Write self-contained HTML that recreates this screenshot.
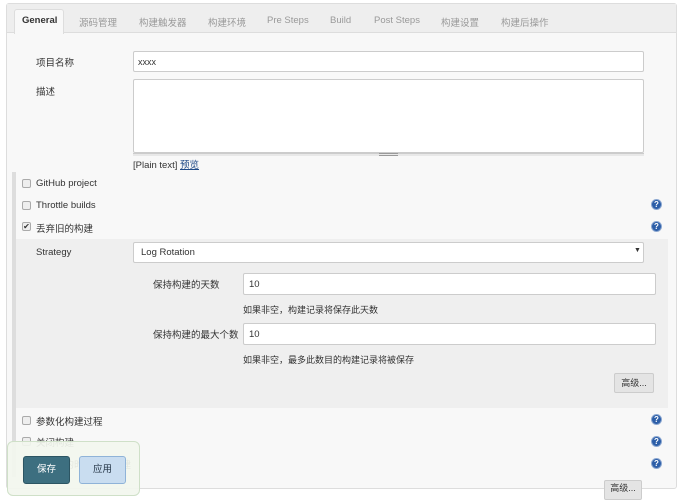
<!DOCTYPE html>
<html><head><meta charset="utf-8"><style>
*{box-sizing:border-box;margin:0;padding:0}
body{width:680px;height:493px;overflow:hidden;background:#fff;font-family:"Liberation Sans","Noto Sans CJK SC",sans-serif;font-size:9.5px;color:#333;position:relative}
.a{position:absolute;white-space:nowrap}
.frame{position:absolute;left:6px;top:3px;width:671px;height:486px;border:1px solid #ddd;background:#f8f8f8;border-radius:3px}
.tabbar{position:absolute;left:7px;top:4px;width:669px;height:29px;background:#eee;border-bottom:1px solid #ddd}
.tab{position:absolute;top:15px;color:#999;font-size:9.5px}
.inp{position:absolute;background:#fff;border:1px solid #ccc;border-radius:2px}
.cb{position:absolute;width:9px;height:9px;border:1px solid #aaa;border-radius:2px;background:#eee}
.help{position:absolute;width:11px;height:11px;border-radius:50%;background:#2c5ea8;border:1px solid #8aa6d0;color:#fff;font-size:8px;font-weight:bold;text-align:center;line-height:9px}
.btn{position:absolute;background:#e4e4e4;border:1px solid #ccc;border-radius:2px;font-size:9px;text-align:center}
</style></head><body>
<div class="frame"></div>
<div class="tabbar"></div>
<div class="a" style="left:14px;top:9px;width:50px;height:25px;background:#f8f8f8;border:1px solid #ddd;border-bottom:none;border-radius:3px 3px 0 0"></div>
<div class="tab" style="left:22px;color:#333;font-weight:bold">General</div>
<div class="tab" style="left:79px">源码管理</div>
<div class="tab" style="left:139px">构建触发器</div>
<div class="tab" style="left:208px">构建环境</div>
<div class="tab" style="left:267px">Pre Steps</div>
<div class="tab" style="left:330px">Build</div>
<div class="tab" style="left:374px">Post Steps</div>
<div class="tab" style="left:441px">构建设置</div>
<div class="tab" style="left:501px">构建后操作</div>

<div class="a" style="left:36px;top:55px">项目名称</div>
<div class="inp" style="left:133px;top:51px;width:511px;height:21px"></div>
<div class="a" style="left:138px;top:57px;font-size:9px">xxxx</div>
<div class="a" style="left:36px;top:84px">描述</div>
<div class="inp" style="left:133px;top:79px;width:511px;height:74px"></div>
<div class="a" style="left:133px;top:153px;width:511px;height:3px;background:#e8e8e8;border-top:1px solid #ccc"></div>
<div class="a" style="left:379px;top:153px;width:19px;height:3px;border-top:1px solid #999;border-bottom:1px solid #999"></div>
<div class="a" style="left:133px;top:157px">[Plain text] <span style="color:#204a87;text-decoration:underline">预览</span></div>

<div class="a" style="left:12px;top:172px;width:4px;height:305px;background:#ddd"></div>
<div class="cb" style="left:22px;top:179px"></div><div class="a" style="left:36px;top:178px">GitHub project</div>
<div class="cb" style="left:22px;top:201px"></div><div class="a" style="left:36px;top:200px">Throttle builds</div>
<div class="help" style="left:651px;top:199px">?</div>
<div class="cb" style="left:22px;top:222px;font-size:8px;line-height:7px;text-align:center">✔</div><div class="a" style="left:36px;top:221px">丢弃旧的构建</div>
<div class="help" style="left:651px;top:221px">?</div>

<div class="a" style="left:16px;top:239px;width:652px;height:169px;background:#efefef"></div>
<div class="a" style="left:36px;top:247px">Strategy</div>
<div class="inp" style="left:133px;top:242px;width:511px;height:21px"></div>
<div class="a" style="left:141px;top:247px">Log Rotation</div>
<div class="a" style="left:634px;top:247px;font-size:7px">▼</div>
<div class="a" style="left:153px;top:277px">保持构建的天数</div>
<div class="inp" style="left:243px;top:273px;width:413px;height:22px"></div>
<div class="a" style="left:249px;top:279px">10</div>
<div class="a" style="left:243px;top:303px;font-size:9px">如果非空，构建记录将保存此天数</div>
<div class="a" style="left:153px;top:327px">保持构建的最大个数</div>
<div class="inp" style="left:243px;top:323px;width:413px;height:22px"></div>
<div class="a" style="left:249px;top:329px">10</div>
<div class="a" style="left:243px;top:353px;font-size:9px">如果非空，最多此数目的构建记录将被保存</div>
<div class="btn" style="left:614px;top:373px;width:40px;height:20px;line-height:18px">高级...</div>

<div class="cb" style="left:22px;top:416px"></div><div class="a" style="left:36px;top:414px">参数化构建过程</div>
<div class="help" style="left:651px;top:414px">?</div>
<div class="cb" style="left:22px;top:437px"></div><div class="a" style="left:36px;top:435px">关闭构建</div>
<div class="help" style="left:651px;top:436px">?</div>
<div class="cb" style="left:22px;top:459px"></div><div class="a" style="left:36px;top:457px">在必要的时候并发构建</div>
<div class="help" style="left:651px;top:458px">?</div>
<div class="btn" style="left:604px;top:480px;width:38px;height:20px;line-height:14px">高级...</div>

<div class="a" style="left:7px;top:441px;width:133px;height:55px;background:rgba(242,246,238,0.92);border:1px solid #cfe0c8;border-radius:6px"></div>
<div class="a" style="left:23px;top:456px;width:47px;height:28px;background:#3d6f80;border:1px solid #2c5563;border-radius:3px;color:#fff;text-align:center;line-height:26px">保存</div>
<div class="a" style="left:79px;top:456px;width:47px;height:28px;background:#c9ddf0;border:1px solid #8fb3d8;border-radius:3px;color:#234;text-align:center;line-height:26px">应用</div>
</body></html>
